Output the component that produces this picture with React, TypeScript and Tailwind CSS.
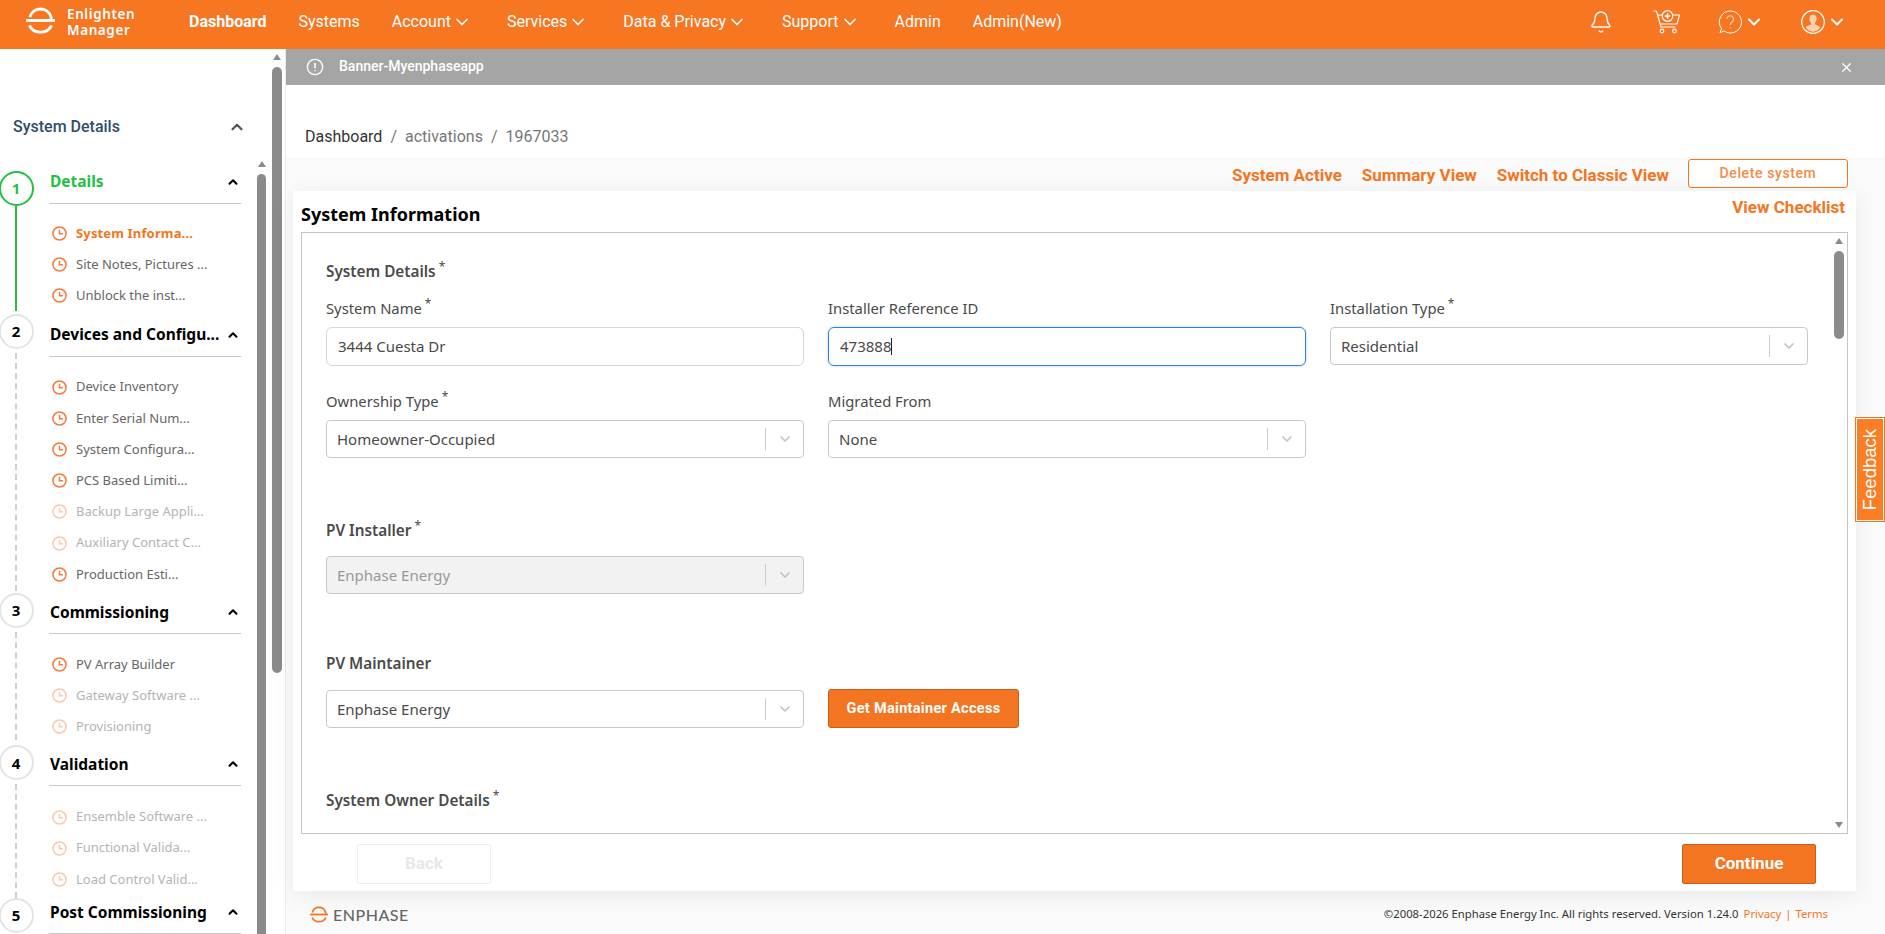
import React from "react";
import { Bell, ChevronDown, ChevronUp, X } from "lucide-react";

const navItems = [
  { label: "Account", menu: true },
  { label: "Services", menu: true },
  { label: "Data & Privacy", menu: true },
  { label: "Support", menu: true },
  { label: "Admin", menu: false },
  { label: "Admin(New)", menu: false },
];

type Step = {
  n: number;
  title: string;
  items: { label: string; state?: "active" | "off" }[];
  railTop: string;
  lineGap: string;
  extra: string;
};

const steps: Step[] = [
  {
    n: 1,
    title: "Details",
    railTop: "mt-[6px]",
    lineGap: "mb-[7px]",
    extra: "",
    items: [
      { label: "System Informa...", state: "active" },
      { label: "Site Notes, Pictures ..." },
      { label: "Unblock the inst..." },
    ],
  },
  {
    n: 2,
    title: "Devices and Configu...",
    railTop: "-mt-[4px]",
    lineGap: "mb-[4px]",
    extra: "",
    items: [
      { label: "Device Inventory" },
      { label: "Enter Serial Num..." },
      { label: "System Configura..." },
      { label: "PCS Based Limiti..." },
      { label: "Backup Large Appli...", state: "off" },
      { label: "Auxiliary Contact C...", state: "off" },
      { label: "Production Esti..." },
    ],
  },
  {
    n: 3,
    title: "Commissioning",
    railTop: "-mt-[2px]",
    lineGap: "mb-[7px]",
    extra: "",
    items: [
      { label: "PV Array Builder" },
      { label: "Gateway Software ...", state: "off" },
      { label: "Provisioning", state: "off" },
    ],
  },
  {
    n: 4,
    title: "Validation",
    railTop: "-mt-[2px]",
    lineGap: "mb-[2px]",
    extra: "-mb-[5px]",
    items: [
      { label: "Ensemble Software ...", state: "off" },
      { label: "Functional Valida...", state: "off" },
      { label: "Load Control Valid...", state: "off" },
    ],
  },
  { n: 5, title: "Post Commissioning", railTop: "mt-[3px]", lineGap: "mb-0", extra: "", items: [] },
];

function Logo({ className }: { className: string }) {
  return (
    <svg viewBox="0 0 30 28" fill="none" stroke="currentColor" strokeWidth="3" className={className}>
      <path d="M4 10.5C5.5 5 10 2 15 2s9.500 3 11 8.500V13" />
      <path d="M0 14h30" />
      <path d="M3.500 19c2 4.500 6.500 7 11.500 7s9.500-2.500 11.500-7" />
    </svg>
  );
}

function ClockIcon({ off }: { off?: boolean }) {
  return (
    <svg viewBox="0 0 24 24" fill="none" stroke="#f47a3a" strokeWidth="2.4" className={off ? "w-[15px] h-[15px] shrink-0 opacity-40" : "w-[15px] h-[15px] shrink-0"}>
      <circle cx="12" cy="12" r="10.5" />
      <path d="M12 6v6.500h5.500" />
    </svg>
  );
}

function CartIcon() {
  return (
    <svg viewBox="0 0 27 24" fill="none" stroke="white" strokeWidth="1.2" className="w-[27px] h-[24px]">
      <path d="M0.500 1h3l4.500 16h14.500" />
      <path d="M5 5h4.500M19.500 5h7l-2.500 9H7.500" />
      <circle cx="14.500" cy="6" r="5.300" />
      <path d="M14.500 3.300v5.400M11.800 6h5.400" strokeWidth="1.5" />
      <circle cx="9" cy="21" r="1.800" />
      <circle cx="21.500" cy="21" r="1.800" />
    </svg>
  );
}

function HelpIcon() {
  return (
    <svg viewBox="0 0 24 24" fill="none" stroke="white" strokeWidth="1" className="w-[24px] h-[24px]">
      <path d="M12.500 1a11 11 0 1 1-6.500 19.900L2 22.800l1.500-4.300A11 11 0 0 1 12.500 1z" />
      <path d="M9 9a3.300 3.300 0 1 1 5 2.900c-1.200.8-1.800 1.500-1.800 3M12.200 17v1.300" stroke="#fcd0b0" strokeWidth="1.200" />
    </svg>
  );
}

function AvatarIcon() {
  return (
    <svg viewBox="0 0 24 24" className="w-[24px] h-[24px]">
      <circle cx="12" cy="12" r="11.300" fill="none" stroke="white" strokeWidth="1.200" />
      <path d="M12 4.500c2.300 0 3.600 1.700 3.600 4.100 0 1.900-.7 3.400-1.600 4.400v1.500c1.800.8 4.100 1.300 5.400 2.800A9.700 9.700 0 0 1 12 21.800a9.700 9.700 0 0 1-7.400-4.500c1.300-1.500 3.600-2 5.400-2.800V13c-.9-1-1.600-2.500-1.600-4.400 0-2.400 1.300-4.100 3.600-4.100z" fill="#fcd0b0" />
    </svg>
  );
}

function Scrollbar({ thumb, className }: { thumb: string; className: string }) {
  return (
    <div className={className}>
      <div className="h-[10px] flex items-center justify-center">
        <div className="w-0 h-0 border-x-[4px] border-x-transparent border-b-[6px] border-b-[#8b8b8b]" />
      </div>
      <div className={thumb} />
    </div>
  );
}

function Sidebar() {
  return (
    <aside className="w-[285px] shrink-0 flex bg-white overflow-hidden font-['Noto_Sans',sans-serif]">
      <div className="w-[257px] shrink-0 pr-[16px]">
        <div className="mt-[63px] h-[30px] flex items-center justify-between pl-[13px] w-[246px]">
          <span className="font-['Roboto',sans-serif] text-[16px] font-medium text-[#2f4d6b]">System Details</span>
          <ChevronUp className="w-[18px] h-[18px] text-[#555]" strokeWidth={3} />
        </div>
        <div className="mt-[23px]">
          {steps.map((s) => (
            <div key={s.n} className={"flex " + s.extra}>
              <div className="w-[50px] shrink-0 flex flex-col items-center pr-[16px] -ml-px">
                <div
                  className={
                    "w-[35px] h-[35px] shrink-0 rounded-full bg-white flex items-center justify-center text-[15px] font-bold border-2 " +
                    s.railTop +
                    (s.n === 1 ? " border-[#1fc13f] text-[#1fc13f]" : " border-[#e4e4e4] text-black")
                  }
                >
                  {s.n}
                </div>
                {s.items.length > 0 &&
                  (s.n === 1 ? (
                    <div className={"w-[2px] flex-1 bg-[#1fc13f] " + s.lineGap} />
                  ) : (
                    <div className={"flex-1 mt-1 border-l-2 border-dashed border-[#cfcfcf] " + s.lineGap} />
                  ))}
              </div>
              <div className="flex-1 min-w-0">
                <div className="h-[39px] pb-[3px] pl-[1px] flex items-center justify-between border-b border-[#c8c8c8]">
                  <span className={"text-[15.5px] font-bold whitespace-nowrap " + (s.n === 1 ? "text-[#1fc13f] -mt-[2px]" : "text-black")}>{s.title}</span>
                  <ChevronUp className="w-[14px] h-[14px] text-black mr-[1px] -mt-px" strokeWidth={3.5} />
                </div>
                {s.items.length > 0 && (
                  <div className={s.n === 1 ? "pt-[14px] pb-[6px]" : "pt-[15px] pb-[5px]"}>
                    {s.items.map((it) => (
                      <div key={it.label} className="h-[31.2px] flex items-center gap-[9px] pl-[3px] whitespace-nowrap">
                        <ClockIcon off={it.state === "off"} />
                        <span
                          className={
                            "text-[13px] " +
                            (it.state === "active"
                              ? "text-[#f47521] font-bold tracking-[0.15px]"
                              : it.state === "off"
                                ? "text-[#b4b4b4]"
                                : "text-[#666]")
                          }
                        >
                          {it.label}
                        </span>
                      </div>
                    ))}
                  </div>
                )}
              </div>
            </div>
          ))}
        </div>
      </div>
      <Scrollbar className="w-[9px] shrink-0 mt-[110px] flex flex-col" thumb="mt-[5px] flex-1 -mb-[20px] rounded-t-[5px] bg-[#8b8b8b]" />
      <Scrollbar className="w-[10px] shrink-0 ml-[6px] mt-[3px] flex flex-col" thumb="mt-[5px] h-[606px] rounded-[5px] bg-[#8b8b8b]" />
    </aside>
  );
}

function Select({ value, disabled }: { value: string; disabled?: boolean }) {
  return (
    <div
      className={
        "h-[38px] flex items-center border border-[#c9c9c9] rounded-[4px] pl-[10px] pr-[10px] text-[15px] " +
        (disabled ? "bg-[#f2f2f2] text-[#999]" : "bg-white text-[#4a4a4a]")
      }
    >
      <span className="flex-1">{value}</span>
      <span className="w-px h-[22px] bg-[#ccc]" />
      <ChevronDown className="w-[16px] h-[16px] text-[#c2c2c2] ml-[11px]" strokeWidth={2.5} />
    </div>
  );
}

function Label({ text, req, heading }: { text: string; req?: boolean; heading?: boolean }) {
  return (
    <div className={"h-[20px] flex items-center " + (heading ? "text-[15.3px] font-semibold text-[#4a4a4a]" : "text-[14.8px] text-[#4a4a4a]")}>
      {text}
      {req && <span className="text-[12px] ml-[3px] -mt-[8px] font-normal">*</span>}
    </div>
  );
}

function Form() {
  return (
    <div className="flex-1 min-w-0 pl-[24px] pt-[28px] font-['Noto_Sans',sans-serif]">
      <Label text="System Details" req heading />
      <div className="mt-[17px] grid grid-cols-3 gap-x-[24px] w-[1482px]">
        <div>
          <Label text="System Name" req />
          <div className="mt-[9px] h-[39px] flex items-center px-[11px] border border-[#d6d6d6] rounded-[6px] text-[15px] text-[#4a4a4a]">3444 Cuesta Dr</div>
        </div>
        <div>
          <Label text="Installer Reference ID" />
          <div className="mt-[9px] h-[39px] flex items-center px-[11px] border border-[#2f80ed] rounded-[6px] text-[15px] text-[#4a4a4a] shadow-[0_0_2px_rgba(47,128,237,0.5)]">
            473888
            <span className="w-px h-[17px] bg-[#222]" />
          </div>
        </div>
        <div>
          <Label text="Installation Type" req />
          <div className="mt-[9px]">
            <Select value="Residential" />
          </div>
        </div>
        <div className="mt-[25px]">
          <Label text="Ownership Type" req />
          <div className="mt-[9px]">
            <Select value="Homeowner-Occupied" />
          </div>
        </div>
        <div className="mt-[25px]">
          <Label text="Migrated From" />
          <div className="mt-[9px]">
            <Select value="None" />
          </div>
        </div>
      </div>
      <div className="mt-[62px]">
        <Label text="PV Installer" req heading />
      </div>
      <div className="mt-[16px] w-[478px]">
        <Select value="Enphase Energy" disabled />
      </div>
      <div className="mt-[59px]">
        <Label text="PV Maintainer" heading />
      </div>
      <div className="mt-[17px] flex gap-[24px] items-center">
        <div className="w-[478px]">
          <Select value="Enphase Energy" />
        </div>
        <button className="w-[191px] h-[39px] -mt-px bg-[#f47521] border border-[#c65f1a] rounded-[3px] text-white text-[14.5px] tracking-[0.3px] font-bold font-['Roboto',sans-serif]">
          Get Maintainer Access
        </button>
      </div>
      <div className="mt-[62px]">
        <Label text="System Owner Details" req heading />
      </div>
    </div>
  );
}

export default function App() {
  return (
    <div className="relative w-[1885px] h-[934px] overflow-hidden flex flex-col bg-white">
      <header className="h-[49px] shrink-0 bg-[#f67621] flex items-center text-white font-['Roboto',sans-serif]">
        <Logo className="w-[29px] h-[27px] ml-[26px] -mt-[9px] shrink-0" />
        <div className="ml-[12px] w-[94px] text-[13.5px] leading-[16px] font-semibold tracking-[0.6px] font-['Noto_Sans',sans-serif] -mt-[5px]">
          <div>Enlighten</div>
          <div>Manager</div>
        </div>
        <span className="ml-[28px] text-[16px] font-bold -mt-[5px]">Dashboard</span>
        <span className="ml-[32px] text-[16px] -mt-[5px]">Systems</span>
        {navItems.map((n) => (
          <span key={n.label} className="ml-[32px] flex items-center gap-px text-[16px] -mt-[5px]">
            {n.label}
            {n.menu && <ChevronDown className="w-[20px] h-[20px] mr-[3px]" strokeWidth={2} />}
          </span>
        ))}
        <div className="ml-auto flex items-center pr-[38px] -mt-[6px]">
          <Bell className="w-[24px] h-[24px]" strokeWidth={1.4} />
          <span className="ml-[40px]"><CartIcon /></span>
          <span className="ml-[38px]"><HelpIcon /></span>
          <ChevronDown className="w-[20px] h-[20px] ml-[2px]" strokeWidth={2.4} />
          <span className="ml-[37px]"><AvatarIcon /></span>
          <ChevronDown className="w-[20px] h-[20px] ml-[2px]" strokeWidth={2.4} />
        </div>
      </header>

      <div className="flex-1 min-h-0 flex">
        <Sidebar />
        <main className="flex-1 min-w-0 flex flex-col bg-[#fafafa] border-l border-[#eaeaea] font-['Roboto',sans-serif]">
          <div className="h-[36px] shrink-0 bg-[#a5a5a5] flex items-center pl-[20px] pr-[31px] text-white">
            <svg viewBox="0 0 20 20" fill="none" stroke="white" strokeWidth="1.5" className="w-[18px] h-[18px]">
              <circle cx="10" cy="10" r="8.5" />
              <path d="M10 5.500v6M10 13.500v1.200" strokeWidth="1.800" />
            </svg>
            <span className="ml-[15px] text-[14px] font-medium -mt-px">Banner-Myenphaseapp</span>
            <X className="ml-auto w-[15px] h-[15px]" strokeWidth={2} />
          </div>
          <div className="h-[72px] shrink-0 bg-white flex items-center pl-[19px] pt-[32px] text-[16px] text-[#777]">
            <span className="text-[#333]">Dashboard</span>
            <span className="mx-[8px]">/</span>
            <span>activations</span>
            <span className="mx-[8px]">/</span>
            <span>1967033</span>
          </div>
          <div className="h-[34px] shrink-0 flex items-start justify-end pr-[37px] pt-[2px] gap-[20px] text-[17px] font-bold text-[#f47521]">
            <span className="pt-[4px]">System Active</span>
            <span className="pt-[4px]">Summary View</span>
            <span className="pt-[4px] -mr-px">Switch to Classic View</span>
            <button className="w-[160px] h-[29px] border border-[#f47521] rounded-[3px] bg-white text-[14px] font-medium tracking-[0.6px] text-[#f58a45]">Delete system</button>
          </div>
          <div className="h-[700px] shrink-0 ml-[7px] mr-[29px] bg-white shadow-[0_4px_20px_rgba(0,0,0,0.07)] flex flex-col px-[8px]">
            <div className="h-[41px] shrink-0 flex justify-between pr-[3px]">
              <span className="pt-[10px] text-[18px] font-bold text-black font-['Noto_Sans',sans-serif]">System Information</span>
              <span className="pt-[4px] text-[17px] font-bold text-[#f47521]">View Checklist</span>
            </div>
            <div className="h-[602px] shrink-0 border border-[#c4c4c4] flex overflow-hidden">
              <Form />
              <div className="w-[13px] shrink-0 pr-[3px] flex flex-col">
                <Scrollbar className="mt-[3px] flex flex-col" thumb="mt-[5px] h-[88px] rounded-[5px] bg-[#8b8b8b]" />
                <div className="mt-auto mb-[5px] flex justify-center">
                  <div className="w-0 h-0 border-x-[4px] border-x-transparent border-t-[6px] border-t-[#8b8b8b]" />
                </div>
              </div>
            </div>
            <div className="flex-1 flex items-start justify-between pt-[10px] pl-[56px] pr-[32px]">
              <button className="w-[134px] h-[40px] border border-[#eeeeee] rounded-[2px] text-[17px] font-bold text-[#e8e8e8]">Back</button>
              <button className="w-[134px] h-[40px] bg-[#f47521] border border-[#c65f1a] rounded-[2px] text-[17px] font-bold text-white">Continue</button>
            </div>
          </div>
          <footer className="flex-1 flex items-center pt-[4px] pl-[24px] pr-[57px] font-['Noto_Sans',sans-serif]">
            <Logo className="w-[18px] h-[17px] text-[#f47521]" />
            <span className="ml-[5px] text-[16px] font-medium tracking-[0.5px] text-[#666] font-['Lato',sans-serif]">ENPHASE</span>
            <span className="ml-auto text-[11.3px] text-[#333]">©2008-2026 Enphase Energy Inc. All rights reserved. Version 1.24.0</span>
            <span className="ml-[5px] text-[11.3px] text-[#f47521]">Privacy</span>
            <span className="mx-[4px] text-[11.3px] text-[#f47521]">|</span>
            <span className="text-[11.3px] text-[#f47521]">Terms</span>
          </footer>
        </main>
      </div>

      <div className="absolute right-0 top-[417px] w-[30px] h-[105px] border border-[#f47521] bg-white p-px">
        <div className="w-full h-full bg-[#fb7d24] flex items-center justify-center">
          <span className="[writing-mode:vertical-rl] rotate-180 text-white text-[18.5px] font-['Liberation_Sans',sans-serif]">Feedback</span>
        </div>
      </div>
    </div>
  );
}
